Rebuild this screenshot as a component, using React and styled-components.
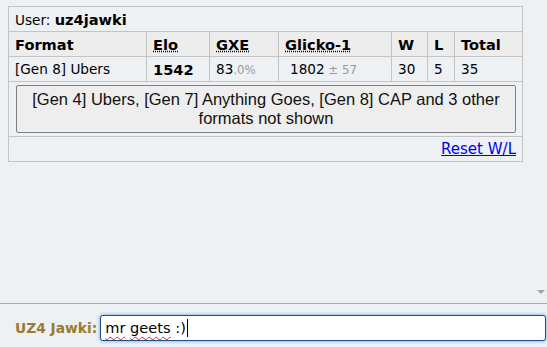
import styled, { createGlobalStyle } from "styled-components";

const Global = createGlobalStyle`
  html, body { margin: 0; padding: 0; }
  body {
    width: 547px;
    height: 347px;
    overflow: hidden;
    background: #edf1f4;
    font-family: "DejaVu Sans", Verdana, sans-serif;
  }
`;

const ladder = {
  user: "uz4jawki",
  format: "[Gen 8] Ubers",
  elo: 1542,
  gxe: ["83", ".0%"],
  glicko: ["1802", "± 57"],
  w: 30,
  l: 5,
  total: 35,
};

const App = () => {
  return (
    <Page>
      <Global />
      <LogArea>
        <Log>
          <Ladder>
            <FullCell>
              User: <Strong>{ladder.user}</Strong>
            </FullCell>
            <Head>Format</Head>
            <Head><Abbr>Elo</Abbr></Head>
            <Head><Abbr>GXE</Abbr></Head>
            <Head><Abbr>Glicko-1</Abbr></Head>
            <Head>W</Head>
            <Head>L</Head>
            <Head>Total</Head>

            <Cell>{ladder.format}</Cell>
            <Cell><Strong>{ladder.elo}</Strong></Cell>
            <Cell>{ladder.gxe[0]}<Small>{ladder.gxe[1]}</Small></Cell>
            <Cell><Shift>{ladder.glicko[0]}</Shift><Small> {ladder.glicko[1]}</Small></Cell>
            <Cell>{ladder.w}</Cell>
            <Cell>{ladder.l}</Cell>
            <Cell>{ladder.total}</Cell>

            <ButtonCell>
              <MoreButton>
                [Gen 4] Ubers, [Gen 7] Anything Goes, [Gen 8] CAP and 3 other formats not shown
              </MoreButton>
            </ButtonCell>
            <FullCell $right>
              <ResetLink href="#">Reset W/L</ResetLink>
            </FullCell>
          </Ladder>
        </Log>
        <Scrollbar>
          <DownArrow />
        </Scrollbar>
      </LogArea>
      <ChatBar>
        <Name>UZ4 Jawki:</Name>
        <TextBox>
          <Misspelled>mr</Misspelled> <Misspelled>geets</Misspelled> :)<Caret />
        </TextBox>
      </ChatBar>
    </Page>
  );
};

export default App;

const Page = styled.div`
  display: flex;
  flex-direction: column;
  width: 547px;
  height: 347px;
`;

const LogArea = styled.div`
  display: flex;
  height: 303px;
  border-bottom: 1px solid #aaaaaa;
`;

const Log = styled.div`
  flex: 1;
  padding: 6px 0 0 8px;
`;

const Ladder = styled.div`
  display: grid;
  grid-template-columns: 138px 63px 69px 113px 36px 27px 68px;
  width: max-content;
  border-left: 1px solid #c4c4c4;
  border-top: 1px solid #c4c4c4;
  font-size: 13.6px;
  color: #000;
`;

const Cell = styled.div`
  box-sizing: border-box;
  height: 25px;
  padding: 4px 6px 0 6px;
  line-height: 17px;
  border-right: 1px solid #c4c4c4;
  border-bottom: 1px solid #c4c4c4;
  white-space: nowrap;
`;

const Head = styled(Cell)`
  background: #ededed;
  font-weight: bold;
  font-size: 14.6px;
`;

const Strong = styled.b`
  font-size: 14.6px;
`;

const FullCell = styled(Cell)`
  grid-column: 1 / -1;
  text-align: ${(p) => (p.$right ? "right" : "left")};
`;

const ButtonCell = styled(Cell)`
  grid-column: 1 / -1;
  height: 55px;
  padding: 3px 6px 3px 7px;
`;

const Abbr = styled.span`
  text-decoration: underline dotted;
  text-underline-offset: 1px;
`;

const Small = styled.span`
  color: #999999;
  font-size: 11.8px;
`;

const Shift = styled.span`
  margin-left: 5px;
`;

const MoreButton = styled.button`
  display: block;
  box-sizing: border-box;
  width: 500px;
  height: 48px;
  padding: 4px 8px;
  margin: 0;
  background: #eeeeee;
  border: 1px solid #7f7f7f;
  border-radius: 2px;
  font-family: "Liberation Sans", Arial, sans-serif;
  font-size: 16.5px;
  line-height: 19px;
  color: #111111;
  text-align: center;
  white-space: normal;
`;

const ResetLink = styled.a`
  color: #0000ee;
  text-decoration: underline;
  font-size: 15px;
`;

const Scrollbar = styled.div`
  width: 12px;
  background: #f0f0f0;
  display: flex;
  flex-direction: column;
  justify-content: flex-end;
  align-items: center;
  padding-bottom: 9px;
`;

const DownArrow = styled.div`
  width: 0;
  height: 0;
  border-left: 4px solid transparent;
  border-right: 4px solid transparent;
  border-top: 4px solid #a3a3a3;
`;

const ChatBar = styled.div`
  display: flex;
  align-items: center;
  padding: 11px 1px 0 15px;
  gap: 3px;
`;

const Name = styled.span`
  font-size: 13.8px;
  font-weight: bold;
  color: #9a7b2c;
  white-space: nowrap;
`;

const TextBox = styled.div`
  flex: 1;
  box-sizing: border-box;
  height: 26px;
  padding: 2px 4px;
  border: 1.5px solid #1d4f8f;
  border-radius: 3px;
  background: #fff;
  box-shadow: 0 0 3px 1px rgba(100, 150, 210, 0.55);
  font-size: 14.6px;
  line-height: 20px;
  color: #000;
  white-space: pre;
`;

const Misspelled = styled.span`
  text-decoration: underline wavy #e02020;
  text-decoration-thickness: 1px;
  text-underline-offset: 3px;
`;

const Caret = styled.span`
  display: inline-block;
  width: 1px;
  height: 18px;
  margin-left: 1px;
  vertical-align: -4px;
  background: #000;
`;
